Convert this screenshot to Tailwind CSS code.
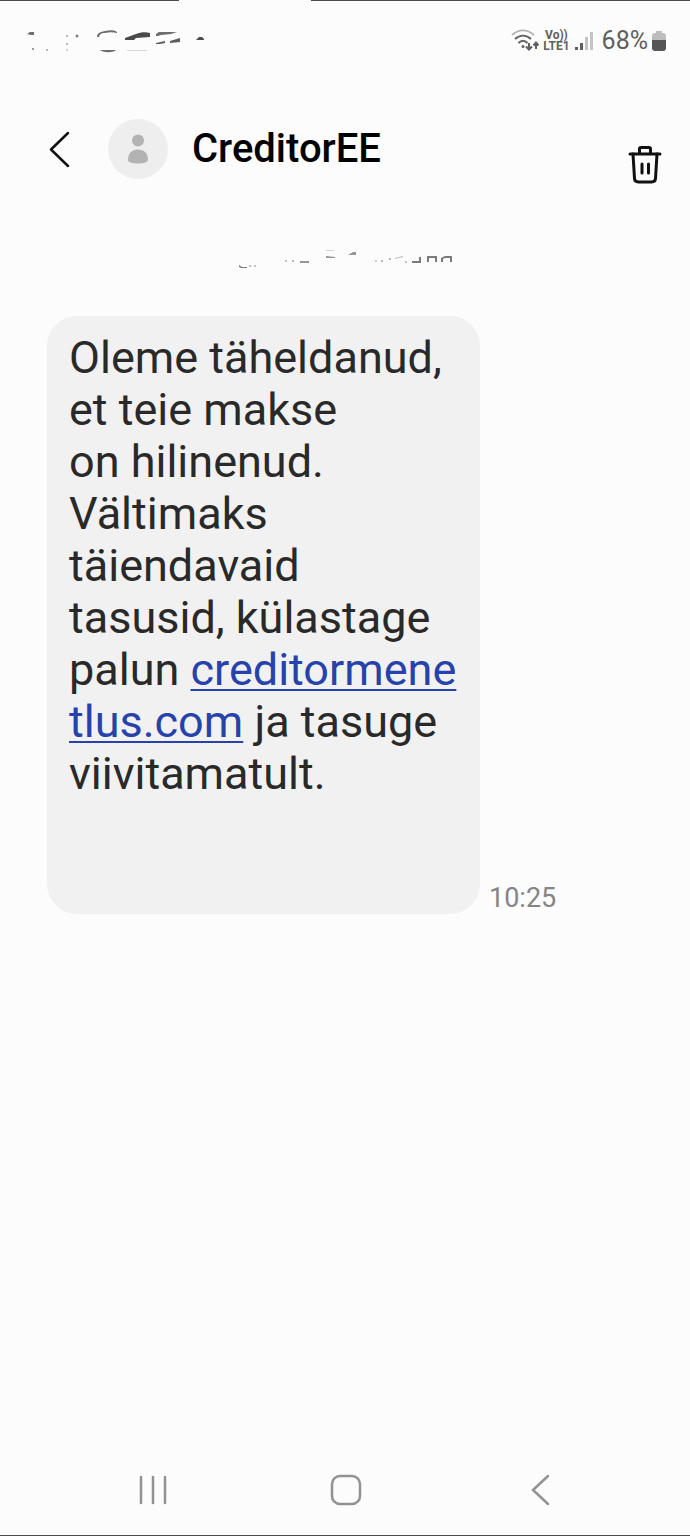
<!DOCTYPE html>
<html lang="et">
<head>
  <meta charset="UTF-8" />
  <meta name="viewport" content="width=device-width, initial-scale=1.0"/>
  <title>CreditorEE</title>
  <script src="https://cdn.jsdelivr.net/npm/@tailwindcss/browser@4"></script>
</head>
<body class="bg-[#fcfcfc] font-[Roboto,sans-serif]">
<div class="min-h-screen flex flex-col border-b border-[#4a4a4a]">

  <!-- Top edge, with a gap in the middle -->
  <div class="flex justify-between h-px">
    <span class="w-[26%] bg-[#4a4a4a]"></span>
    <span class="w-[55%] bg-[#4a4a4a]"></span>
  </div>

  <!-- Status bar -->
  <div class="flex justify-between items-center h-20 pl-6 pr-[23px]">
    <svg class="w-[190px] h-10" viewBox="0 0 190 40" fill="#4a4a4a" aria-hidden="true">
      <path d="M3 13l3-2h4v3H7z" opacity=".8"/>
      <circle cx="9" cy="28" r="1" opacity=".7"/><circle cx="23" cy="29" r="1" opacity=".5"/>
      <circle cx="43" cy="15" r="1" opacity=".5"/><circle cx="53" cy="15" r="1.5" opacity=".7"/>
      <circle cx="43" cy="23" r="1" opacity=".5"/><circle cx="43" cy="29" r="1" opacity=".3"/>
      <path d="M73 16c0-3 2-5 8-6 5-1 10-1 12 1v1c-4-1-8-1-12 0-4 0-5 1-6 4z" opacity=".8"/>
      <path d="M76 29h16c-3 3-12 3-16 0z" opacity=".8"/>
      <path d="M101 17l11-4c5-2 10-2 14-1v4l-14 1-2 2h-9z"/>
      <path d="M103 29h20v1h-20z" opacity=".2"/>
      <path d="M132 13l3-2h18l-6 2-10 1-3 1h-2z" opacity=".8"/>
      <path d="M132 22l9-2v2l-5 1h-4zM146 20l10-3v4l-10 1z" opacity=".9"/>
      <path d="M172 19l3-3h3l2 2v1z"/>
    </svg>
    <div class="flex items-center text-[#5f5f5f]">
      <svg class="w-7 h-6" viewBox="0 0 28 24" fill="none" stroke="currentColor" stroke-width="2" aria-hidden="true">
        <path d="M1 6C8 0 16 0 23 6" stroke="#b4b4b4"/>
        <path d="M4 10c5-4.500 11-4.500 16 0M7.500 14c3-3 6-3 9 0"/>
        <circle cx="12" cy="17.500" r="1.500" fill="currentColor" stroke="none"/>
        <path d="M18 14v6m-3-2.500l3 3 3-3M25 20v-6m-2.500 2.500L25 13.500l2.500 3" stroke-width="2"/>
      </svg>
      <span class="flex flex-col items-center ml-1 text-[12px] leading-[11px] font-bold">
        <span>Vo))</span>
        <span>LTE1</span>
      </span>
      <svg class="w-5 h-6 ml-1" viewBox="0 0 20 24" fill="currentColor" aria-hidden="true">
        <path d="M1 18h3v3H1zM6 14h3v7H6z"/>
        <path d="M11 8h3v13h-3zM16 3h3v18h-3z" fill="#c4c4c4"/>
      </svg>
      <span class="ml-2 text-[25px] leading-8">68%</span>
      <svg class="w-4 h-6 ml-[3px]" viewBox="0 0 16 24" aria-hidden="true">
        <path d="M5 2h6v2h1q3 0 3 3v4H1V7q0-3 3-3h1z" fill="#bdbdbd"/>
        <path d="M1 11h14v8q0 3-3 3H4q-3 0-3-3z" fill="#555"/>
      </svg>
    </div>
  </div>

  <!-- Conversation header -->
  <header class="flex items-center h-[136px] pl-12 pr-[27px]">
    <button type="button" aria-label="Tagasi" class="w-6 h-10">
      <svg class="w-6 h-10" viewBox="0 0 24 40" fill="none" stroke="#111" stroke-width="2.500" stroke-linecap="round" stroke-linejoin="round">
        <path d="M20 4L3 20.500 20 37"/>
      </svg>
    </button>
    <svg class="w-15 h-15 ml-9" viewBox="0 0 60 60" aria-hidden="true">
      <circle cx="30" cy="30" r="30" fill="#eeeeee"/>
      <circle cx="30" cy="21.500" r="6" fill="#b3b3b3"/>
      <path d="M20 41c0-7 4-10.500 10-10.500S40 34 40 41c0 2-4 3.500-10 3.500S20 43 20 41z" fill="#b3b3b3"/>
    </svg>
    <h1 class="ml-6 text-[40px] leading-[48px] font-medium text-black">CreditorEE</h1>
    <button type="button" aria-label="Kustuta" class="ml-auto mt-8 w-9 h-10">
      <svg class="w-9 h-10" viewBox="0 0 36 40" fill="none" stroke="#111" stroke-width="3" stroke-linecap="round" stroke-linejoin="round">
        <path d="M3 9h30M12.500 8V4q0-1.500 1.500-1.500h8q1.500 0 1.500 1.500v4"/>
        <path d="M6 9l1.500 24.500q.2 3.500 4 3.500h13q3.800 0 4-3.500L30 9"/>
        <path d="M15 19v9M21.500 19v9"/>
      </svg>
    </button>
  </header>

  <!-- Date divider, mostly erased -->
  <div class="flex justify-center h-[99px] pt-7">
    <svg class="w-[220px] h-7" viewBox="0 0 220 28" fill="#7a7a7a" aria-hidden="true">
      <path d="M4 20l3 2h5v1H6l-2-1z"/>
      <circle cx="15" cy="21" r="1" opacity=".6"/><circle cx="20" cy="21" r="1" opacity=".6"/>
      <circle cx="51" cy="16" r="1" opacity=".6"/><circle cx="58" cy="16" r="1" opacity=".7"/>
      <path d="M65 16h9v2h-9z" opacity=".8"/>
      <path d="M91 5h8v1h-8z" opacity=".3"/><path d="M91 11l9 1v1h-9z" opacity=".8"/>
      <path d="M113 10l5-3h3v3h-8z" opacity=".8"/>
      <circle cx="141" cy="16" r="1" opacity=".5"/><circle cx="147" cy="16" r="1" opacity=".7"/><circle cx="155" cy="14" r="1" opacity=".7"/>
      <path d="M160 13l8-2v1l-8 2z" opacity=".5"/><circle cx="171" cy="17" r="1" opacity=".6"/>
      <path d="M177 16h7v-4h2v6h-9zM192 11h10v6h-2v-4h-6v4h-2zM206 13l4-2h7v6h-2v-4h-5l-2 1v3h-2z"/>
    </svg>
  </div>

  <!-- Messages -->
  <main class="flex items-end pl-[47px] pr-6">
    <p class="w-[433px] pt-4 pb-[114px] pl-[22px] pr-5 rounded-[30px] bg-[#f1f1f1] text-[#292929] text-[45px] leading-[52px]">
      Oleme täheldanud, et teie makse on&nbsp;hilinenud. Vältimaks täiendavaid<br>tasusid, külastage palun <a href="#" class="break-all text-[#2742ab] underline decoration-2 underline-offset-4">creditormenetlus.com</a> ja tasuge viivitamatult.
    </p>
    <time class="ml-[9px] text-[27px] leading-8 text-[#858585]">10:25</time>
  </main>

  <!-- System navigation -->
  <nav class="mt-auto flex justify-between h-[90px] items-center px-[132px] text-[#929292]">
    <button type="button" aria-label="Hiljutised">
      <svg class="w-10 h-10" viewBox="0 0 40 40" fill="none" stroke="currentColor" stroke-width="2.500" stroke-linecap="round">
        <path d="M9 7v26M21 7v26M33 7v26"/>
      </svg>
    </button>
    <button type="button" aria-label="Avaleht">
      <svg class="w-10 h-10" viewBox="0 0 40 40" fill="none" stroke="currentColor" stroke-width="2.500">
        <rect x="7" y="6" width="28" height="28" rx="8"/>
      </svg>
    </button>
    <button type="button" aria-label="Tagasi">
      <svg class="w-10 h-10" viewBox="0 0 40 40" fill="none" stroke="currentColor" stroke-width="2.500" stroke-linecap="round">
        <path d="M30 6L15 20l15 14"/>
      </svg>
    </button>
  </nav>
</div>
</body>
</html>
